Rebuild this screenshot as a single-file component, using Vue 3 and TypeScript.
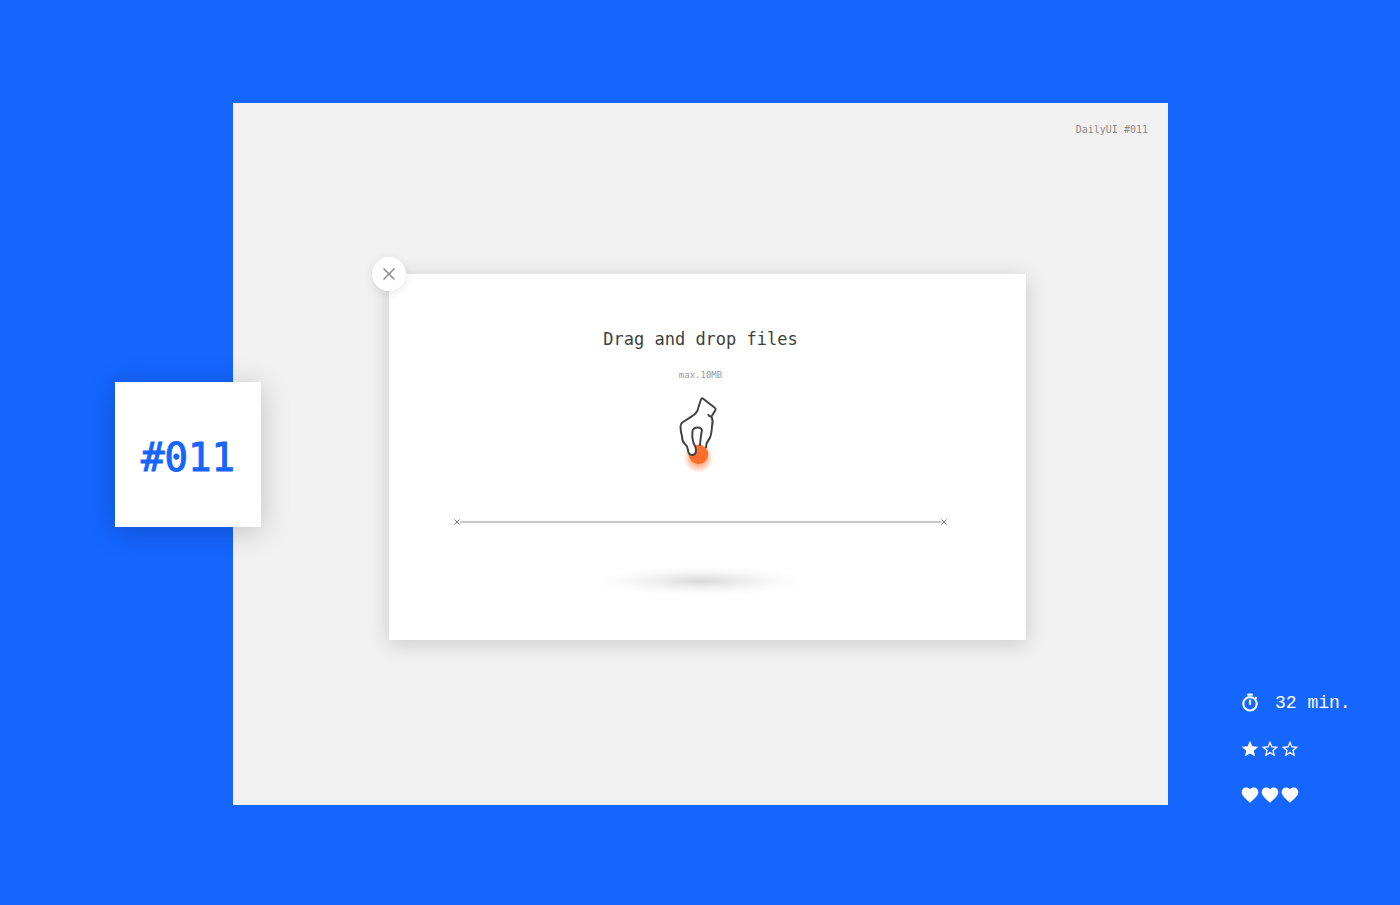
<script setup lang="ts">
const difficulty: boolean[] = [true, false, false]
const hearts: number[] = [1, 2, 3]
</script>

<template>
  <main class="page">
    <section class="canvas">
      <header class="label">DailyUI #011</header>
      <div class="dialog" role="dialog" aria-labelledby="dialog-title">
        <button class="close" type="button" aria-label="Close">
          <svg viewBox="0 0 14 14" width="14" height="14" fill="none" stroke="#8c8c8c" stroke-width="1.5">
            <path d="M1.5 1.5 12.5 12.5M12.5 1.5 1.5 12.5" />
          </svg>
        </button>
        <h1 id="dialog-title" class="title">Drag and drop files</h1>
        <p class="limit">max.10MB</p>
        <svg class="hand" viewBox="1 0 80 90" width="80" height="90" aria-hidden="true">
          <defs>
            <radialGradient id="glow">
              <stop offset="0.5" stop-color="#ff6d2d" stop-opacity="0.5" />
              <stop offset="1" stop-color="#ff6d2d" stop-opacity="0" />
            </radialGradient>
          </defs>
          <circle cx="38.5" cy="73" r="15" fill="url(#glow)" />
          <circle cx="38.5" cy="69.5" r="9.7" fill="#ff6d2d" />
          <path
            d="M28 62Q28.500 70 32.500 70Q36 70 36 65Q35.500 61 33 58L23 56Z"
            fill="#fff"
          />
          <path
            d="M46 62.500Q46 58 48.500 55Q51.500 52 52 41Q53.500 36 51.500 31.500M48.500 30Q49.500 32 51.500 31.500L55.500 25Q56 23.500 54.500 22.500L43.500 14Q41.500 12.500 41 14.500L38.500 22Q38 26 35.500 28.500Q32 31.500 23 37Q20.500 38.500 20.500 41Q20.500 47 22 51Q22 56 24.500 58.500Q27.500 61 28 65Q28.500 70 32 70Q36 70 36 65Q35.500 61 33.500 58Q31.500 52 32.500 46Q33.500 42.500 37.500 42.500Q41.500 42.500 42 45.500Q41 49 40 60"
            fill="none"
            stroke="#424242"
            stroke-width="2"
            stroke-linecap="round"
            stroke-linejoin="round"
          />
        </svg>
        <div class="rule" aria-hidden="true">
          <svg viewBox="0 0 6 6" width="6" height="6"><path d="M.5 .5 5.500 5.500M5.500 .5 .5 5.500" /></svg>
          <span class="line"></span>
          <svg viewBox="0 0 6 6" width="6" height="6"><path d="M.5 .5 5.500 5.500M5.500 .5 .5 5.500" /></svg>
        </div>
        <div class="shade"></div>
      </div>
    </section>

    <aside class="badge">#011</aside>

    <aside class="facts">
      <div class="time">
        <svg viewBox="0 0 24 24" width="20" height="20" fill="#fff" stroke="#fff" stroke-width=".5" aria-hidden="true">
          <path d="M15 1H9v2h6V1zm-4 13h2V8h-2v6zm8.030-6.610 1.420-1.420c-.43-.51-.9-.99-1.410-1.410l-1.420 1.420C16.070 4.740 14.120 4 12 4c-4.970 0-9 4.030-9 9s4.020 9 9 9 9-4.030 9-9c0-2.120-.74-4.070-1.970-5.610zM12 20c-3.870 0-7-3.130-7-7s3.130-7 7-7 7 3.130 7 7-3.130 7-7 7z" />
        </svg>
        <span>32 min.</span>
      </div>
      <div class="marks" role="img" aria-label="Difficulty 1 of 3">
        <svg v-for="(full, i) in difficulty" :key="i" viewBox="0 0 24 24" width="20" height="20" fill="#fff">
          <path v-if="full" d="M12 17.270 18.180 21l-1.640-7.030L22 9.240l-7.190-.61L12 2 9.190 8.630 2 9.240l5.460 4.730L5.820 21z" />
          <path v-else d="M22 9.240l-7.190-.62L12 2 9.190 8.630 2 9.240l5.460 4.730L5.820 21 12 17.270 18.180 21l-1.630-7.030L22 9.240zM12 15.400l-3.760 2.270 1-4.280-3.320-2.880 4.380-.38L12 6.100l1.710 4.040 4.380.38-3.320 2.880 1 4.280L12 15.400z" />
        </svg>
      </div>
      <div class="marks" role="img" aria-label="3 of 3 hearts">
        <svg v-for="n in hearts" :key="n" viewBox="0 0 24 24" width="20" height="20" fill="#fff">
          <path d="M12 21.350l-1.450-1.320C5.400 15.360 2 12.280 2 8.500 2 5.420 4.420 3 7.500 3c1.740 0 3.410.81 4.500 2.090C13.090 3.810 14.760 3 16.500 3 19.580 3 22 5.420 22 8.500c0 3.780-3.400 6.860-8.550 11.540L12 21.350z" />
        </svg>
      </div>
    </aside>
  </main>
</template>

<style>
body {
  margin: 0;
}
</style>

<style scoped>
.page {
  display: grid;
  grid-template-columns: 233fr 935fr 232fr;
  grid-template-rows: 103px 1fr 100px;
  min-height: 100vh;
  background: #1565ff;
  font-family: "DejaVu Sans Mono", monospace;
}
.canvas {
  grid-area: 2 / 2;
  display: flex;
  flex-direction: column;
  background: #f1f1f1;
}
.label {
  padding: 21px 20px 0;
  margin-bottom: 138px;
  font-size: 10px;
  line-height: 12px;
  text-align: right;
  color: #8b8b8b;
}
.dialog {
  position: relative;
  display: flex;
  flex-direction: column;
  align-items: center;
  margin: 0 142px 0 156px;
  padding: 53px 79px 44px 65px;
  background: #fff;
  box-shadow: 0 4px 20px rgba(0, 0, 0, 0.16);
}
.close {
  position: absolute;
  top: -17px;
  left: -17px;
  display: grid;
  place-items: center;
  width: 34px;
  height: 34px;
  padding: 0;
  border: 0;
  border-radius: 50%;
  background: #fff;
  box-shadow: 0 2px 10px rgba(0, 0, 0, 0.1);
}
.title {
  margin: 0;
  font-size: 17px;
  font-weight: 400;
  line-height: 24px;
  color: #404040;
}
.limit {
  margin: 18px 0 0;
  font-size: 9px;
  line-height: 12px;
  color: #999;
}
.hand {
  margin-top: 4px;
}
.rule {
  display: flex;
  align-items: center;
  align-self: stretch;
  height: 6px;
  margin-top: 44px;
}
.rule svg {
  fill: none;
  stroke: #777;
  stroke-width: 1;
}
.line {
  flex: 1;
  height: 2px;
  background: #c8c8c8;
}
.shade {
  width: 210px;
  height: 30px;
  margin-top: 41px;
  background: radial-gradient(closest-side, #d8d8da, #ececec 35%, #f9f9f9 70%, #fff);
}
.badge {
  grid-area: 2 / 1;
  place-self: center end;
  display: grid;
  place-items: center;
  box-sizing: border-box;
  width: 146px;
  height: 145px;
  margin-right: -28px;
  padding-top: 8px;
  background: #fff;
  box-shadow: 0 4px 28px rgba(0, 0, 0, 0.2);
  font-size: 39px;
  line-height: 48px;
  color: #1565ff;
  -webkit-text-stroke: 1px #1565ff;
  z-index: 1;
}
.facts {
  grid-area: 2 / 3;
  align-self: end;
  display: flex;
  flex-direction: column;
  gap: 26px;
  margin-left: 72px;
  color: #fff;
}
.time {
  display: flex;
  align-items: center;
  gap: 15px;
  height: 20px;
  font-family: "Liberation Mono", monospace;
  font-size: 18px;
  line-height: 20px;
  white-space: nowrap;
}
.marks {
  display: flex;
  height: 20px;
}
</style>
